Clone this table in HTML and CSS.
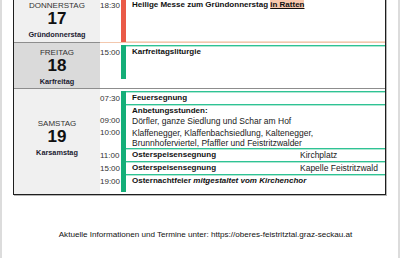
FILE: index.html
```html
<!DOCTYPE html>
<html lang="de">
<head>
<meta charset="utf-8">
<title>Karwoche</title>
<link rel="stylesheet" href="styles.css">
</head>
<body>
<div class="page">
  <div class="plan">
    <div class="day day-light day-first">
      <div class="dname">DONNERSTAG</div>
      <div class="dnum">17</div>
      <div class="dlabel">Gründonnerstag</div>
    </div>
    <div class="sched sched-first">
      <div class="item start red">
        <div class="t">18:30</div>
        <div class="b"></div>
        <div class="c c-first"><b>Heilige Messe zum Gründonnerstag <span class="hl">in Ratten</span></b></div>
      </div>
    </div>

    <div class="day day-dark">
      <div class="dname">FREITAG</div>
      <div class="dnum">18</div>
      <div class="dlabel">Karfreitag</div>
    </div>
    <div class="sched sched-mid">
      <div class="item start">
        <div class="t">15:00</div>
        <div class="b"></div>
        <div class="c c-tall"><b>Karfreitagsliturgie</b></div>
      </div>
    </div>

    <div class="day day-light day-tall day-last">
      <div class="dname">SAMSTAG</div>
      <div class="dnum">19</div>
      <div class="dlabel">Karsamstag</div>
    </div>
    <div class="sched sched-last">
      <div class="item start">
        <div class="t">07:30</div>
        <div class="b"></div>
        <div class="c"><b>Feuersegnung</b></div>
      </div>
      <div class="item start">
        <div class="t"></div>
        <div class="b"></div>
        <div class="c"><b>Anbetungsstunden:</b></div>
      </div>
      <div class="item">
        <div class="t">09:00</div>
        <div class="b"></div>
        <div class="c desc">Dörfler, ganze Siedlung und Schar am Hof</div>
      </div>
      <div class="item gap">
        <div class="t">10:00</div>
        <div class="b"></div>
        <div class="c desc">Klaffenegger, Klaffenbachsiedlung, Kaltenegger,<br>Brunnhoferviertel, Pfaffler und Feistritzwalder</div>
      </div>
      <div class="item start">
        <div class="t">11:00</div>
        <div class="b"></div>
        <div class="c split"><b>Osterspeisensegnung</b><span class="loc">Kirchplatz</span></div>
      </div>
      <div class="item start">
        <div class="t">15:00</div>
        <div class="b"></div>
        <div class="c split"><b>Osterspeisensegnung</b><span class="loc">Kapelle Feistritzwald</span></div>
      </div>
      <div class="item start last">
        <div class="t">19:00</div>
        <div class="b"></div>
        <div class="c"><b>Osternachtfeier <i>mitgestaltet vom Kirchenchor</i></b></div>
      </div>
    </div>
  </div>

  <p class="footer">Aktuelle Informationen und Termine unter: https://oberes-feistritztal.graz-seckau.at</p>
</div>
</body>
</html>
```

FILE: styles.css
```css
* {
  box-sizing: border-box;
  margin: 0;
  padding: 0;
}

html,
body {
  height: 100%;
}

body {
  background: #dcdcdc;
  font-family: "Liberation Sans", Arial, sans-serif;
  color: #111;
}

.page {
  margin: 0 2px;
  min-height: 100%;
  background: #fff;
  padding-left: 11px;
  overflow: hidden;
}

.plan {
  width: 373px;
  margin-top: -5px;
  border: 1px solid #1e1e1e;
  display: grid;
  grid-template-columns: 86px 1fr;
  box-shadow: 1px 1px 0 #b5b5b5;
}

/* day column */
.day {
  display: flex;
  flex-direction: column;
  justify-content: center;
  align-items: center;
  padding-top: 2px;
  border-bottom: 1px solid #8d8d8d;
}

.day-light {
  background: #f0f0f0;
}

.day-dark {
  background: #dadada;
}

.day-tall {
  padding: 0 0 7px;
}

.day-last {
  border-bottom: 0;
}

.dname {
  font-size: 8px;
  line-height: 9px;
  color: #333;
}

.dnum {
  font-size: 17px;
  line-height: 18px;
  font-weight: bold;
  color: #111;
}

.dlabel {
  margin-top: 2px;
  font-size: 7.3px;
  line-height: 9px;
  font-weight: bold;
  color: #1b1b30;
}

/* schedule column */
.sched {
  padding-top: 2px;
  border-bottom: 1px solid #8d8d8d;
  background: #fff;
}

.sched-first {
  border-bottom-color: #f3c8ae;
}

.sched-mid {
  padding-bottom: 9px;
}

.sched-last {
  padding-bottom: 2px;
  border-bottom: 0;
}

.item {
  display: grid;
  grid-template-columns: 21px 5px 1fr;
  font-size: 8px;
  line-height: 10px;
}

.t {
  color: #333;
  white-space: nowrap;
}

.b {
  background: #14ae78;
}

.red .b {
  background: #ea5a48;
}

.c {
  padding-left: 6px;
  color: #111;
}

.start .t {
  padding-top: 3px;
}

.start .c {
  border-top: 1px solid #2fc294;
  box-shadow: inset 0 1px 0 #aee8d3;
  padding-top: 1px;
}

.red .c {
  border-top-color: #f3c8ae;
  box-shadow: none;
}

.c-first {
  min-height: 44px;
  border-bottom: 1px solid #f8dccb;
}

.c-tall {
  min-height: 34px;
}

.gap .t,
.gap .c {
  padding-top: 2px;
}

.last .c {
  padding-bottom: 6px;
}

.desc {
  font-size: 8.5px;
  color: #1a1a1a;
}

.split {
  display: grid;
  grid-template-columns: 168px 1fr;
}

.loc {
  font-size: 8.5px;
  color: #1a1a1a;
}

.hl {
  background: #f8c8ad;
  text-decoration: underline;
}

.footer {
  margin-top: 35px;
  text-align: center;
  font-size: 8.1px;
  line-height: 10px;
  color: #111;
}
```
